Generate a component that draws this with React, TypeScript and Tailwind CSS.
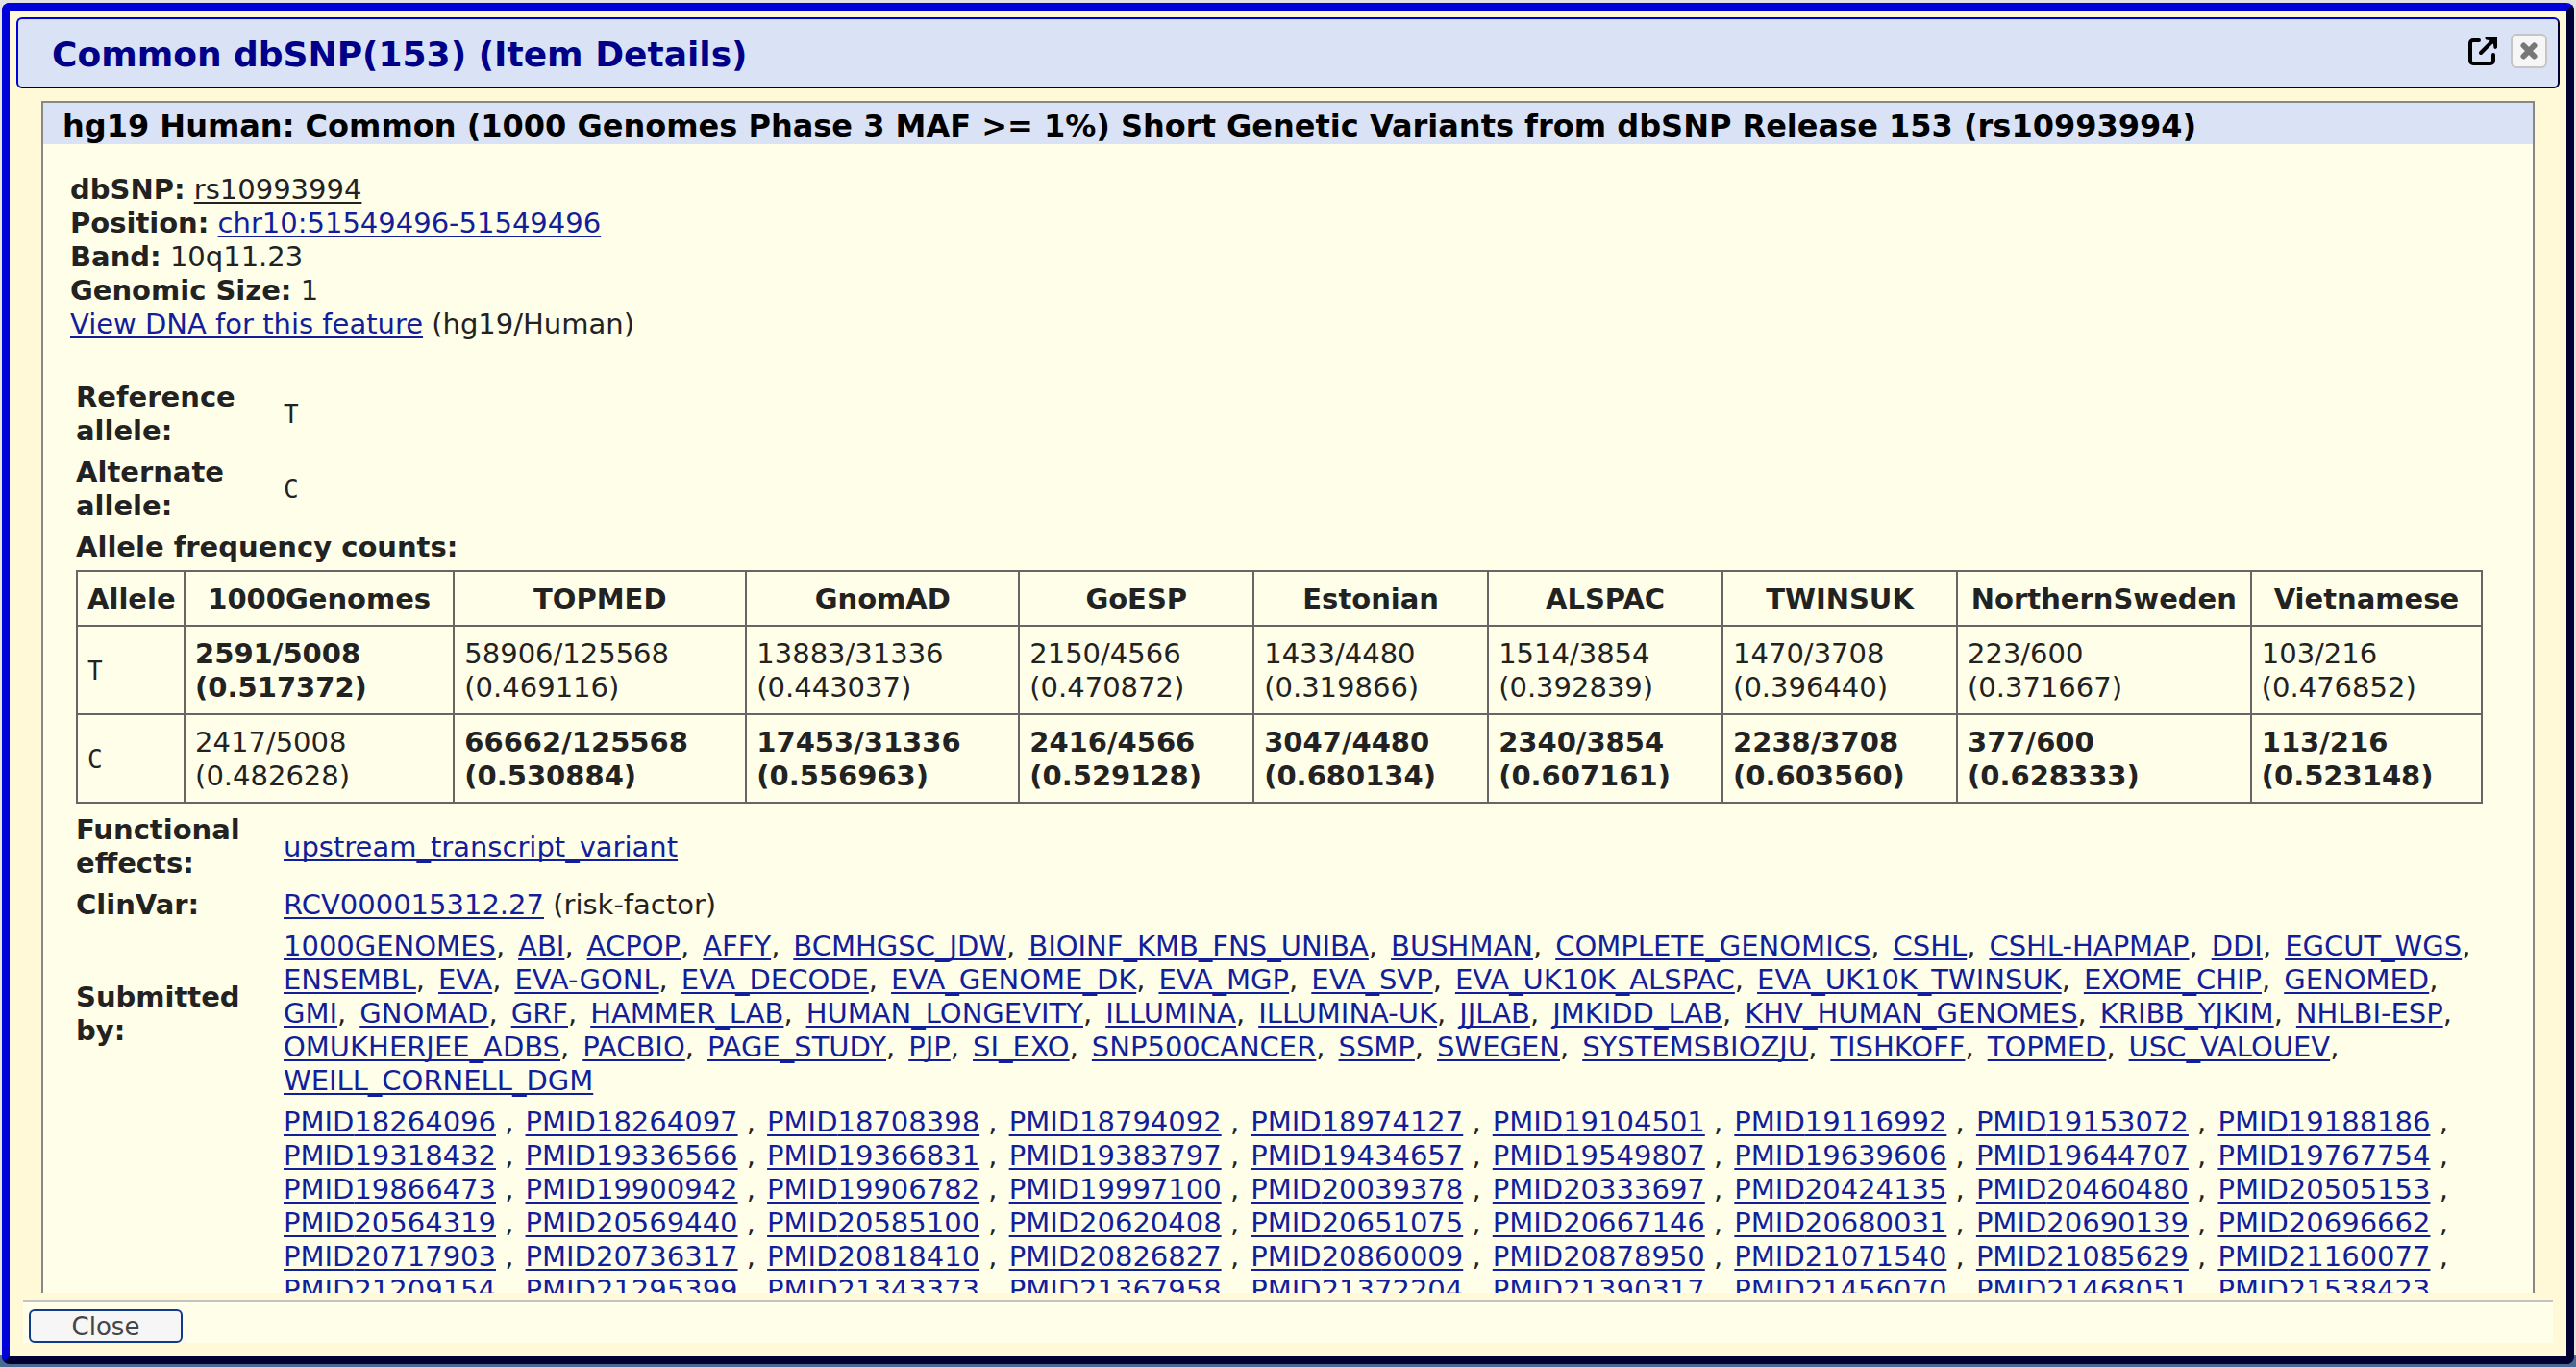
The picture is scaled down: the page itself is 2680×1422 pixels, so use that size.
import React from "react";

const submitters: string[][] = [
  ["1000GENOMES", "ABI", "ACPOP", "AFFY", "BCMHGSC_JDW", "BIOINF_KMB_FNS_UNIBA", "BUSHMAN", "COMPLETE_GENOMICS", "CSHL", "CSHL-HAPMAP", "DDI", "EGCUT_WGS"],
  ["ENSEMBL", "EVA", "EVA-GONL", "EVA_DECODE", "EVA_GENOME_DK", "EVA_MGP", "EVA_SVP", "EVA_UK10K_ALSPAC", "EVA_UK10K_TWINSUK", "EXOME_CHIP", "GENOMED"],
  ["GMI", "GNOMAD", "GRF", "HAMMER_LAB", "HUMAN_LONGEVITY", "ILLUMINA", "ILLUMINA-UK", "JJLAB", "JMKIDD_LAB", "KHV_HUMAN_GENOMES", "KRIBB_YJKIM", "NHLBI-ESP"],
  ["OMUKHERJEE_ADBS", "PACBIO", "PAGE_STUDY", "PJP", "SI_EXO", "SNP500CANCER", "SSMP", "SWEGEN", "SYSTEMSBIOZJU", "TISHKOFF", "TOPMED", "USC_VALOUEV"],
  ["WEILL_CORNELL_DGM"],
];

const pmids = [
  "18264096", "18264097", "18708398", "18794092", "18974127", "19104501", "19116992", "19153072", "19188186",
  "19318432", "19336566", "19366831", "19383797", "19434657", "19549807", "19639606", "19644707", "19767754",
  "19866473", "19900942", "19906782", "19997100", "20039378", "20333697", "20424135", "20460480", "20505153",
  "20564319", "20569440", "20585100", "20620408", "20651075", "20667146", "20680031", "20690139", "20696662",
  "20717903", "20736317", "20818410", "20826827", "20860009", "20878950", "21071540", "21085629", "21160077",
  "21209154", "21295399", "21343373", "21367958", "21372204", "21390317", "21456070", "21468051", "21538423",
];

type Freq = { project: string; t: [string, string]; c: [string, string]; major: "T" | "C" };

const frequencies: Freq[] = [
  { project: "1000Genomes", t: ["2591/5008", "(0.517372)"], c: ["2417/5008", "(0.482628)"], major: "T" },
  { project: "TOPMED", t: ["58906/125568", "(0.469116)"], c: ["66662/125568", "(0.530884)"], major: "C" },
  { project: "GnomAD", t: ["13883/31336", "(0.443037)"], c: ["17453/31336", "(0.556963)"], major: "C" },
  { project: "GoESP", t: ["2150/4566", "(0.470872)"], c: ["2416/4566", "(0.529128)"], major: "C" },
  { project: "Estonian", t: ["1433/4480", "(0.319866)"], c: ["3047/4480", "(0.680134)"], major: "C" },
  { project: "ALSPAC", t: ["1514/3854", "(0.392839)"], c: ["2340/3854", "(0.607161)"], major: "C" },
  { project: "TWINSUK", t: ["1470/3708", "(0.396440)"], c: ["2238/3708", "(0.603560)"], major: "C" },
  { project: "NorthernSweden", t: ["223/600", "(0.371667)"], c: ["377/600", "(0.628333)"], major: "C" },
  { project: "Vietnamese", t: ["103/216", "(0.476852)"], c: ["113/216", "(0.523148)"], major: "C" },
];

function Link({ children, dark = false }: { children: React.ReactNode; dark?: boolean }) {
  return (
    <a
      href="#"
      className={
        dark
          ? "text-[#222222] underline decoration-2 underline-offset-3 [text-decoration-skip-ink:none]"
          : "text-[#121e9a] underline decoration-2 underline-offset-3 [text-decoration-skip-ink:none]"
      }
    >
      {children}
    </a>
  );
}

function Mono({ children }: { children: React.ReactNode }) {
  return <span className="font-['DejaVu_Sans_Mono',monospace] text-[26px]">{children}</span>;
}

function Row({ label, children }: { label: string; children: React.ReactNode }) {
  return (
    <div className="flex items-center py-1">
      <div className="w-[216px] shrink-0 pr-10 font-bold">{label}</div>
      <div className="min-w-0 flex-1">{children}</div>
    </div>
  );
}

function FrequencyRow({ allele }: { allele: "T" | "C" }) {
  return (
    <tr>
      <td className="border-2 border-[#666666] px-2.5 pt-[11px] pb-[9px]">
        <Mono>{allele}</Mono>
      </td>
      {frequencies.map((f) => {
        const [count, share] = allele === "T" ? f.t : f.c;
        return (
          <td
            key={f.project}
            className={
              f.major === allele
                ? "border-2 border-[#666666] px-2.5 pt-[11px] pb-[9px] font-bold"
                : "border-2 border-[#666666] px-2.5 pt-[11px] pb-[9px]"
            }
          >
            {count}
            <br />
            {share}
          </td>
        );
      })}
    </tr>
  );
}

export default function App() {
  return (
    <div className="h-screen overflow-hidden bg-[linear-gradient(to_bottom,#e2e2e2_0,#e2e2e2_1410px,#4a6a90_1410px)] px-0.5 py-[3px] font-['DejaVu_Sans',Verdana,sans-serif] text-[29px] leading-[35px] text-[#222222]">
      <div
        role="dialog"
        aria-labelledby="dialog-title"
        className="flex h-full flex-col rounded-lg border-8 border-t-[#0000d8] border-r-[#000033] border-b-[#000033] border-l-[#0000d8] bg-[#fff9d7] px-[7px] pt-[7px] pb-3.5"
      >
        <header className="flex h-[74px] shrink-0 items-center rounded-md border-2 border-t-[#0000d8] border-r-[#000033] border-b-[#000033] border-l-[#0000d8] bg-[#dae3f6] pr-[11px] pl-[35px]">
          <h1 id="dialog-title" className="flex-1 pt-[3px] text-[36px] leading-[44px] font-bold text-[#000088]">
            Common dbSNP(153) (Item Details)
          </h1>
          <a href="#" aria-label="Open in new window" className="mr-3.5 mb-1 block">
            <svg viewBox="0 0 30 30" className="size-[30px]" fill="none" stroke="#000" strokeWidth="4" strokeLinecap="round" strokeLinejoin="round">
              <path d="M11 4H5a3 3 0 0 0-3 3v18a3 3 0 0 0 3 3h18a3 3 0 0 0 3-3v-6" />
              <path d="M13 17L27 3" />
              <path d="M19 0H30V11.500Q28.500 14 26.500 12L26 8L22 4L18.500 3.500Q16 1.500 19 0Z" fill="#000" stroke="none" />
            </svg>
          </a>
          <button type="button" aria-label="Close dialog" className="mb-1 flex h-9 w-[38px] items-center justify-center rounded-md border-2 border-[#c5c5c5] bg-[#f6f6f6]">
            <svg viewBox="0 0 20 20" className="size-5" stroke="#777777" strokeWidth="6" strokeLinecap="round">
              <path d="M4.500 4.500L15.500 15.500M15.500 4.500L4.500 15.500" />
            </svg>
          </button>
        </header>

        <main className="mt-[13px] min-h-0 flex-1 overflow-hidden px-[26px]">
          <section className="border-2 border-[#888888] bg-[#fffee8]">
            <h2 className="bg-[#dae3f6] pt-1.5 pl-5 text-[32px] leading-[37px] font-bold whitespace-nowrap text-black">
              hg19 Human: Common (1000 Genomes Phase 3 MAF &gt;= 1%) Short Genetic Variants from dbSNP Release 153 (rs10993994)
            </h2>

            <div className="mt-[30px] pl-7">
              <div><b>dbSNP:</b> <Link dark>rs10993994</Link></div>
              <div><b>Position:</b> <Link>chr10:51549496-51549496</Link></div>
              <div><b>Band:</b> 10q11.23</div>
              <div><b>Genomic Size:</b> 1</div>
              <div><Link>View DNA for this feature</Link> (hg19/Human)</div>
            </div>

            <div className="mt-[37px] pr-[52px] pl-[34px]">
              <Row label="Reference allele:"><Mono>T</Mono></Row>
              <Row label="Alternate allele:"><Mono>C</Mono></Row>
              <h3 id="freq-title" className="pt-1 pb-1.5 font-bold">Allele frequency counts:</h3>
              <table aria-labelledby="freq-title" className="mb-1.5 w-full table-fixed border-collapse text-left">
                <colgroup>
                  <col className="w-[4.480%]" />
                  <col className="w-[11.200%]" />
                  <col className="w-[12.150%]" />
                  <col className="w-[11.350%]" />
                  <col className="w-[9.750%]" />
                  <col className="w-[9.750%]" />
                  <col className="w-[9.750%]" />
                  <col className="w-[9.750%]" />
                  <col className="w-[12.220%]" />
                  <col className="w-[9.600%]" />
                </colgroup>
                <thead>
                  <tr>
                    <th scope="col" className="border-2 border-[#666666] px-2.5 pt-[11px] pb-[9px]">Allele</th>
                    {frequencies.map((f) => (
                      <th key={f.project} scope="col" className="border-2 border-[#666666] px-1 pt-[11px] pb-[9px] text-center">{f.project}</th>
                    ))}
                  </tr>
                </thead>
                <tbody>
                  <FrequencyRow allele="T" />
                  <FrequencyRow allele="C" />
                </tbody>
              </table>

              <Row label="Functional effects:"><Link>upstream_transcript_variant</Link></Row>
              <Row label="ClinVar:"><Link>RCV000015312.27</Link> (risk-factor)</Row>
              <Row label="Submitted by:">
                {submitters.map((line, i) => (
                  <div key={line[0]} className="flex gap-x-3.5 whitespace-nowrap">
                    {line.map((name) => (
                      <span key={name}>
                        <Link>{name}</Link>
                        {i < submitters.length - 1 && ","}
                      </span>
                    ))}
                  </div>
                ))}
              </Row>
              <Row label="">
                <div className="mr-6 grid grid-cols-9 whitespace-nowrap">
                  {pmids.map((id) => (
                    <span key={id}><Link>PMID{id}</Link> ,</span>
                  ))}
                </div>
              </Row>
            </div>
          </section>
        </main>

        <footer className="mx-[7px] mt-[7px] flex h-[45px] shrink-0 items-end border-t-2 border-[#c3c3c3] bg-[#fffee8] pl-1.5">
          <button type="button" className="flex h-[35px] w-40 items-center justify-center rounded-md border-2 border-[#103a8c] bg-[#f6f6f6] pt-0.5 text-[26px] leading-[29px] text-[#454545]">
            Close
          </button>
        </footer>
      </div>
    </div>
  );
}
